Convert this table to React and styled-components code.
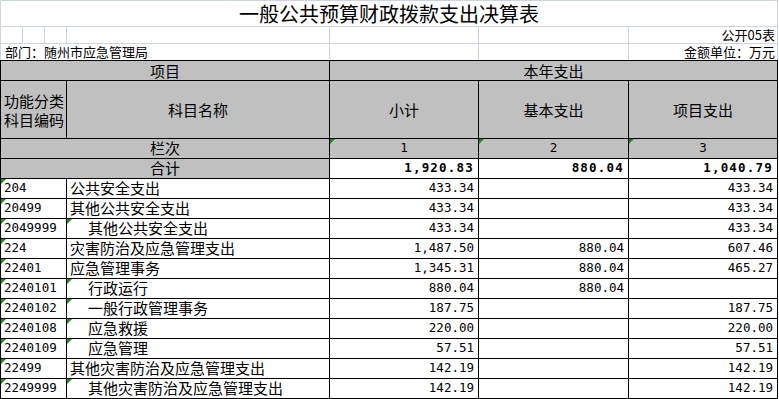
import React from "react";
import styled, { createGlobalStyle } from "styled-components";

const rows = [
  { code: "204", name: "公共安全支出", total: "433.34", basic: "", project: "433.34" },
  { code: "20499", name: "其他公共安全支出", total: "433.34", basic: "", project: "433.34" },
  { code: "2049999", name: "其他公共安全支出", sub: true, total: "433.34", basic: "", project: "433.34" },
  { code: "224", name: "灾害防治及应急管理支出", total: "1,487.50", basic: "880.04", project: "607.46" },
  { code: "22401", name: "应急管理事务", total: "1,345.31", basic: "880.04", project: "465.27" },
  { code: "2240101", name: "行政运行", sub: true, total: "880.04", basic: "880.04", project: "" },
  { code: "2240102", name: "一般行政管理事务", sub: true, total: "187.75", basic: "", project: "187.75" },
  { code: "2240108", name: "应急救援", sub: true, total: "220.00", basic: "", project: "220.00" },
  { code: "2240109", name: "应急管理", sub: true, total: "57.51", basic: "", project: "57.51" },
  { code: "22499", name: "其他灾害防治及应急管理支出", total: "142.19", basic: "", project: "142.19" },
  { code: "2249999", name: "其他灾害防治及应急管理支出", sub: true, total: "142.19", basic: "", project: "142.19" },
];

function App() {
  return (
    <>
      <GlobalStyle />
      <Sheet>
        <colgroup>
          <col style={{ width: 22 }} />
          <col style={{ width: 22 }} />
          <col style={{ width: 22 }} />
          <col style={{ width: 263 }} />
          <col style={{ width: 149 }} />
          <col style={{ width: 150 }} />
          <col style={{ width: 149 }} />
        </colgroup>
        <tbody>
          <Row $h={26}>
            <TitleCell colSpan={7}>一般公共预算财政拨款支出决算表</TitleCell>
          </Row>
          <Row $h={17}>
            <MetaCell />
            <MetaCell />
            <MetaCell />
            <MetaCell />
            <MetaCell />
            <MetaCell />
            <MetaCell $align="right">公开05表</MetaCell>
          </Row>
          <Row $h={17}>
            <MetaCell colSpan={4} $last>部门：随州市应急管理局</MetaCell>
            <MetaCell $last />
            <MetaCell $last />
            <MetaCell $last $align="right">金额单位：万元</MetaCell>
          </Row>
          <Row $h={20}>
            <HeadCell colSpan={4}>项目</HeadCell>
            <HeadCell colSpan={3}>本年支出</HeadCell>
          </Row>
          <Row $h={58}>
            <HeadCell colSpan={3}>
              功能分类
              <br />
              科目编码
            </HeadCell>
            <HeadCell>科目名称</HeadCell>
            <HeadCell>小计</HeadCell>
            <HeadCell>基本支出</HeadCell>
            <HeadCell>项目支出</HeadCell>
          </Row>
          <Row $h={20}>
            <HeadCell colSpan={4} $bottom>栏次</HeadCell>
            <HeadCell $bottom $mono>
              <Mark />1
            </HeadCell>
            <HeadCell $bottom $mono>
              <Mark />2
            </HeadCell>
            <HeadCell $bottom $mono>
              <Mark />3
            </HeadCell>
          </Row>
          <Row $h={20}>
            <HeadCell colSpan={4} $bottom>合计</HeadCell>
            <AmountCell $bold>1,920.83</AmountCell>
            <AmountCell $bold>880.04</AmountCell>
            <AmountCell $bold>1,040.79</AmountCell>
          </Row>
          {rows.map((r) => (
            <Row $h={20} key={r.code}>
              <CodeCell colSpan={3}>
                <Mark />
                {r.code}
              </CodeCell>
              <NameCell $sub={r.sub}>
                {r.sub && <Mark />}
                {r.name}
              </NameCell>
              <AmountCell>{r.total}</AmountCell>
              <AmountCell>{r.basic}</AmountCell>
              <AmountCell>{r.project}</AmountCell>
            </Row>
          ))}
        </tbody>
      </Sheet>
    </>
  );
}

const GlobalStyle = createGlobalStyle`
  body {
    margin: 0;
    background: #fff;
    font-family: "Noto Sans CJK SC", sans-serif;
    color: #000;
  }
`;

const Sheet = styled.table`
  width: 778px;
  border-collapse: collapse;
  table-layout: fixed;
`;

const Row = styled.tr`
  height: ${({ $h }) => $h}px;
`;

const BaseCell = styled.td`
  position: relative;
  padding: 0 3px 2px;
  white-space: nowrap;
  overflow: hidden;
  font-size: 15px;
  line-height: 16px;
  border: 1px solid #000;
`;

const TitleCell = styled(BaseCell)`
  border: 1px solid #cdd5e5;
  text-align: center;
  vertical-align: middle;
  font-size: 20px;
  line-height: 22px;
  padding: 0;
  overflow: visible;
`;

const MetaCell = styled(BaseCell)`
  border: 1px solid #cdd5e5;
  border-bottom-color: ${({ $last }) => ($last ? "#000" : "#cdd5e5")};
  text-align: ${({ $align }) => $align || "left"};
  vertical-align: bottom;
  font-size: 13px;
  line-height: 14px;
  padding: 0 2px 1px 4px;
`;

const HeadCell = styled(BaseCell)`
  background: #c0c0c0;
  text-align: center;
  vertical-align: ${({ $bottom }) => ($bottom ? "bottom" : "middle")};
  line-height: ${({ $bottom }) => ($bottom ? "16px" : "19px")};
  padding-bottom: ${({ $bottom }) => ($bottom ? "2px" : "0")};
  font-family: ${({ $mono }) =>
    $mono ? '"DejaVu Sans Mono", monospace' : '"Noto Sans CJK SC", sans-serif'};
  font-size: ${({ $mono }) => ($mono ? "12.5px" : "15px")};
`;

const CodeCell = styled(BaseCell)`
  vertical-align: bottom;
  font-family: "DejaVu Sans Mono", monospace;
  font-size: 12.5px;
  padding-left: 3px;
`;

const NameCell = styled(BaseCell)`
  vertical-align: bottom;
  padding-left: ${({ $sub }) => ($sub ? "21px" : "3px")};
`;

const AmountCell = styled(BaseCell)`
  vertical-align: bottom;
  text-align: right;
  font-family: "DejaVu Sans Mono", monospace;
  font-size: 12.5px;
  font-weight: ${({ $bold }) => ($bold ? 700 : 400)};
  letter-spacing: ${({ $bold }) => ($bold ? "1.2px" : "0")};
  padding-right: 4px;
`;

const Mark = styled.span`
  position: absolute;
  top: 0;
  left: 0;
  width: 0;
  height: 0;
  border-top: 5px solid #1a8c1a;
  border-right: 5px solid transparent;
`;

export default App;
